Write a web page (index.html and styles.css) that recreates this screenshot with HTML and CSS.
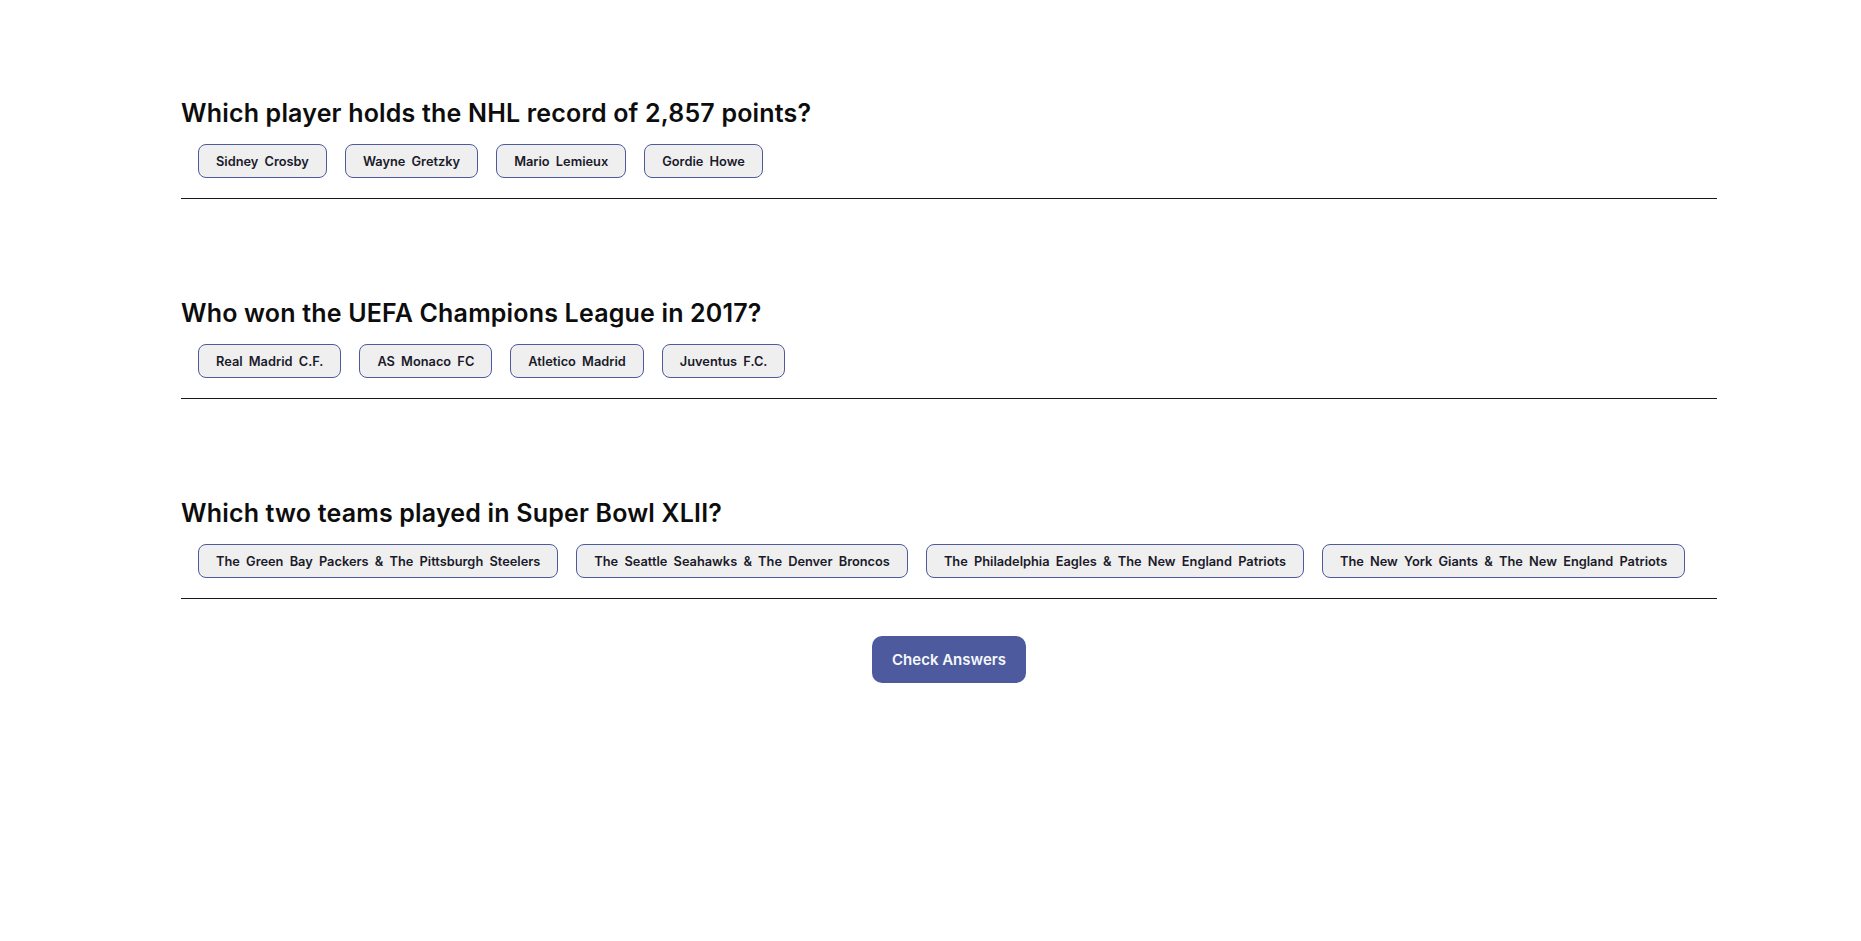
FILE: index.html
```html
<!DOCTYPE html>
<html lang="en">
<head>
<meta charset="utf-8">
<title>Quizzical</title>
<link rel="stylesheet" href="styles.css">
</head>
<body>
<main class="quiz">
  <section class="question">
    <h2 class="question-title">Which player holds the NHL record of 2,857 points?</h2>
    <div class="answers">
      <button class="answer">Sidney Crosby</button>
      <button class="answer">Wayne Gretzky</button>
      <button class="answer">Mario Lemieux</button>
      <button class="answer">Gordie Howe</button>
    </div>
  </section>
  <section class="question">
    <h2 class="question-title">Who won the UEFA Champions League in 2017?</h2>
    <div class="answers">
      <button class="answer">Real Madrid C.F.</button>
      <button class="answer">AS Monaco FC</button>
      <button class="answer">Atletico Madrid</button>
      <button class="answer">Juventus F.C.</button>
    </div>
  </section>
  <section class="question">
    <h2 class="question-title">Which two teams played in Super Bowl XLII?</h2>
    <div class="answers">
      <button class="answer">The Green Bay Packers &amp; The Pittsburgh Steelers</button>
      <button class="answer">The Seattle Seahawks &amp; The Denver Broncos</button>
      <button class="answer">The Philadelphia Eagles &amp; The New England Patriots</button>
      <button class="answer">The New York Giants &amp; The New England Patriots</button>
    </div>
  </section>
  <div class="actions">
    <button class="check-btn">Check Answers</button>
  </div>
</main>
</body>
</html>
```

FILE: styles.css
```css
* {
  box-sizing: border-box;
}

html, body {
  margin: 0;
  padding: 0;
  background: #ffffff;
}

body {
  font-family: Inter, "Noto Sans", sans-serif;
  color: #0d0d0d;
}

.quiz {
  width: 1536px;
  margin-left: 181px;
}

.question {
  padding: 99px 0 20px;
  border-bottom: 1px solid #1a1a1a;
}

.question:first-child {
  padding-top: 98px;
}

.question-title {
  margin: 0 0 16px;
  font-size: 25px;
  line-height: 30px;
  font-weight: 600;
  letter-spacing: 0.18px;
  color: #0d0d0d;
}

.answers {
  display: flex;
  flex-wrap: wrap;
  gap: 18px;
  padding-left: 17px;
}

.answer {
  height: 34px;
  padding: 0 17px;
  border: 1px solid #4d5b9e;
  border-radius: 8px;
  background: #efefef;
  font-family: Inter, "Noto Sans", sans-serif;
  font-size: 12.8px;
  font-weight: 600;
  letter-spacing: 0;
  word-spacing: 3px;
  color: #1a1a2a;
  cursor: pointer;
}

.actions {
  display: flex;
  justify-content: center;
  padding-top: 37px;
}

.check-btn {
  height: 47px;
  padding: 0 20px;
  border: none;
  border-radius: 10px;
  background: #4d5b9e;
  color: #f5f7fb;
  font-family: Inter, "Noto Sans", sans-serif;
  font-size: 15px;
  font-weight: 600;
  cursor: pointer;
}
```
